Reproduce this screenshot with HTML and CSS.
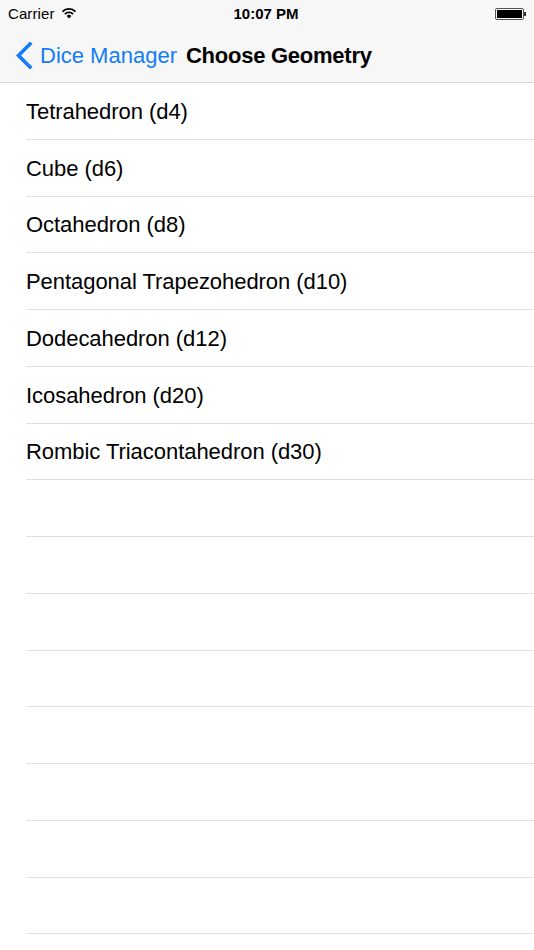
FILE: index.html
```html
<!DOCTYPE html>
<html>
<head>
<meta charset="utf-8">
<link rel="stylesheet" href="styles.css">
</head>
<body>
<div class="screen">
  <header class="topbar">
    <div class="status">
      <div class="status-left">
        <span class="carrier">Carrier</span>
        <svg class="wifi" width="16" height="12" viewBox="0 0 16 12">
          <path d="M8 11.5 L5.6 8.9 A3.6 3.6 0 0 1 10.4 8.9 Z" fill="#000"/>
          <path d="M3.9 7.1 A5.9 5.9 0 0 1 12.1 7.1" fill="none" stroke="#000" stroke-width="1.8"/>
          <path d="M1.5 4.6 A9.2 9.2 0 0 1 14.5 4.6" fill="none" stroke="#000" stroke-width="1.8"/>
        </svg>
      </div>
      <div class="time">10:07 PM</div>
      <div class="status-right">
        <div class="battery"><div class="battery-fill"></div></div>
        <div class="battery-nub"></div>
      </div>
    </div>
    <nav class="navbar">
      <a class="back">
        <svg class="chevron" width="18" height="27" viewBox="0 0 18 27">
          <path d="M15 2 L3.5 13.5 L15 25" fill="none" stroke="#137cf6" stroke-width="3.6" stroke-linecap="square"/>
        </svg>
        <span class="back-label">Dice Manager</span>
      </a>
      <span class="title">Choose Geometry</span>
    </nav>
  </header>
  <ul class="list">
    <li class="row"><span class="cell">Tetrahedron (d4)</span></li>
    <li class="row"><span class="cell">Cube (d6)</span></li>
    <li class="row"><span class="cell">Octahedron (d8)</span></li>
    <li class="row"><span class="cell">Pentagonal Trapezohedron (d10)</span></li>
    <li class="row"><span class="cell">Dodecahedron (d12)</span></li>
    <li class="row"><span class="cell">Icosahedron (d20)</span></li>
    <li class="row"><span class="cell">Rombic Triacontahedron (d30)</span></li>
    <li class="row"><span class="cell"></span></li>
    <li class="row"><span class="cell"></span></li>
    <li class="row"><span class="cell"></span></li>
    <li class="row"><span class="cell"></span></li>
    <li class="row"><span class="cell"></span></li>
    <li class="row"><span class="cell"></span></li>
    <li class="row"><span class="cell"></span></li>
    <li class="row"><span class="cell"></span></li>
  </ul>
</div>
</body>
</html>
```
FILE: styles.css
```css
* { box-sizing: border-box; }
html, body {
  margin: 0;
  padding: 0;
  background: #fff;
}
body {
  font-family: "Liberation Sans", Arial, sans-serif;
  color: #000;
}
.screen {
  width: 534px;
  height: 950px;
  overflow: hidden;
}
.topbar {
  background: #f7f7f7;
  border-bottom: 1px solid #d9d9d9;
  height: 83px;
}
.status {
  height: 26px;
  display: grid;
  grid-template-columns: 1fr auto 1fr;
  align-items: center;
  padding: 1px 8px 0;
}
.status-left {
  display: flex;
  align-items: center;
  gap: 6px;
}
.carrier {
  font-size: 15px;
  letter-spacing: 0.1px;
}
.wifi { margin-top: -2px; }
.time {
  font-size: 15px;
  font-weight: bold;
  padding-right: 2px;
}
.status-right {
  display: flex;
  justify-content: flex-end;
  align-items: center;
}
.battery {
  width: 29px;
  height: 12px;
  border: 1px solid #555;
  border-radius: 2px;
  padding: 1px;
}
.battery-fill {
  width: 100%;
  height: 100%;
  background: #000;
}
.battery-nub {
  width: 2px;
  height: 4px;
  background: #333;
}
.navbar {
  height: 56px;
  display: flex;
  align-items: center;
  padding: 3px 0 0 15px;
}
.back {
  display: flex;
  align-items: center;
  color: #137cf6;
}
.chevron {
  margin-top: -1px;
}
.back-label {
  font-size: 22px;
  margin-left: 7px;
}
.title {
  font-size: 22px;
  font-weight: bold;
  margin-left: 9px;
  letter-spacing: -0.25px;
}
.list {
  list-style: none;
  margin: 0;
  padding: 0;
}
.row {
  height: 56.75px;
  padding-left: 26px;
}
.cell {
  display: flex;
  align-items: center;
  height: 100%;
  padding-top: 2px;
  border-bottom: 1px solid #e0e0e0;
  font-size: 22px;
  letter-spacing: -0.05px;
}
```
